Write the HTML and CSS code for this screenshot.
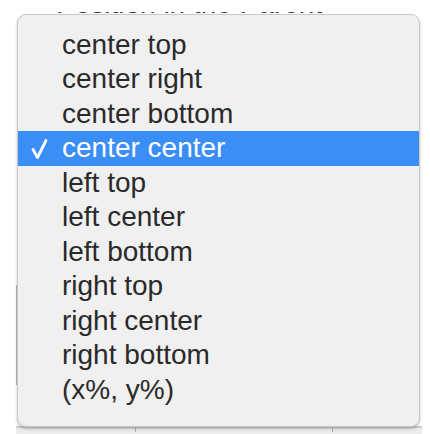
FILE: index.html
```html
<!DOCTYPE html>
<html>
<head>
<meta charset="utf-8">
<link rel="stylesheet" href="styles.css">
</head>
<body>
<div class="page">
  <div class="backdrop">
    <div class="behind-title">Position in the Parent</div>
    <div class="behind-side"></div>
    <div class="behind-grid">
      <span class="cell c1"></span><span class="cell c2"></span><span class="cell c3"></span><span class="cell c4"></span>
    </div>
  </div>
  <ul class="menu">
    <li class="item">center top</li>
    <li class="item">center right</li>
    <li class="item">center bottom</li>
    <li class="item selected"><svg class="check" width="20" height="22" viewBox="0 0 20 22"><path d="M3 11.5 L7.5 19.5 L16 2.5" fill="none" stroke="#ffffff" stroke-width="2.8" stroke-linecap="round" stroke-linejoin="round"/></svg>center center</li>
    <li class="item">left top</li>
    <li class="item">left center</li>
    <li class="item">left bottom</li>
    <li class="item">right top</li>
    <li class="item">right center</li>
    <li class="item">right bottom</li>
    <li class="item">(x%, y%)</li>
  </ul>
</div>
</body>
</html>
```

FILE: styles.css
```css
html, body {
  margin: 0;
  padding: 0;
  background: #ffffff;
}
.page {
  position: relative;
  width: 430px;
  height: 434px;
  overflow: hidden;
  font-family: "Liberation Sans", Arial, sans-serif;
}
.backdrop {
  margin: 12px 0 0 16px;
  width: 406px;
  height: 422px;
  position: relative;
  overflow: hidden;
  display: flex;
  flex-direction: column;
}
.behind-title {
  font-size: 28px;
  line-height: 28px;
  height: 28px;
  color: #333;
  margin: -22px 0 0 40px;
  white-space: nowrap;
}
.behind-side {
  margin-top: 267px;
  width: 1px;
  height: 100px;
  background: #b8b8b8;
}
.behind-grid {
  margin-top: auto;
  height: 6px;
  border-top: 2px solid #cfcfcf;
  background: #ececec;
  display: flex;
}
.cell {
  border-right: 1px solid #b0b0b0;
  height: 4px;
}
.c1 { width: 119px; }
.c2 { width: 140px; border-right-color: #ececec; }
.c3 { width: 55px; }
.c4 { flex: 1; border-right: none; }

.menu {
  position: absolute;
  left: 17px;
  top: 14px;
  width: 403px;
  height: 413px;
  margin: 0;
  padding: 12.5px 0 0;
  list-style: none;
  box-sizing: border-box;
  background: #f0f0f0;
  border: 1px solid #c9c9c9;
  border-radius: 9px;
  box-shadow: 0 2px 3px rgba(0, 0, 0, 0.22);
}
.item {
  position: relative;
  height: 34.5px;
  line-height: 34.5px;
  padding-left: 44px;
  font-size: 28px;
  color: #2a2a2a;
  white-space: nowrap;
}
.item.selected {
  background: #3a8ef6;
  color: #ffffff;
}
.check {
  position: absolute;
  left: 12px;
  top: 7px;
}
```
